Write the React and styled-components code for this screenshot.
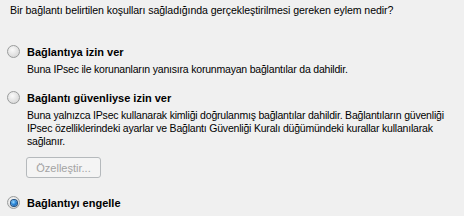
import React from "react";
import styled, { createGlobalStyle } from "styled-components";

const Global = createGlobalStyle`
  html, body {
    margin: 0;
    padding: 0;
    background: #f0f0f0;
  }
  body {
    font-family: "Liberation Sans", sans-serif;
    font-size: 11px;
    color: #000;
  }
`;

const Page = styled.div`
  width: 464px;
  height: 216px;
  overflow: hidden;
  padding: 4px 0 0 10px;
  box-sizing: border-box;
  display: flex;
  flex-direction: column;
`;

const Question = styled.p`
  margin: 0;
  line-height: 13px;
  font-size: 10.6px;
  letter-spacing: -0.09px;
  white-space: nowrap;
`;

const Options = styled.div`
  display: flex;
  flex-direction: column;
  margin-top: 27px;
  margin-left: -3px;
  gap: 14px;
`;

const Option = styled.div`
  display: flex;
  flex-direction: column;
`;

const Label = styled.label`
  display: flex;
  align-items: center;
  gap: 7px;
  height: 15px;
  font-weight: bold;
  font-size: 11px;
`;

const Radio = styled.span`
  width: 11px;
  height: 11px;
  border-radius: 50%;
  border: 1px solid #9a9c9c;
  background: radial-gradient(circle at 40% 35%, #fafafa 0%, #e2e2e2 55%, #cfcfcf 100%);
  display: flex;
  align-items: center;
  justify-content: center;
  flex: none;

  &::after {
    content: "";
    display: ${(p) => (p.$checked ? "block" : "none")};
    width: 6px;
    height: 6px;
    border-radius: 50%;
    background: radial-gradient(circle at 40% 35%, #9fdcff 0%, #2a86d8 45%, #0d4a94 100%);
    box-shadow: 0 0 0 1px #1d4f80;
  }
`;

const Description = styled.div`
  margin-left: 20px;
  margin-top: 4px;
  line-height: 13px;
  font-size: 10.5px;
  letter-spacing: -0.2px;
  white-space: nowrap;
`;

const Button = styled.button`
  margin: 9px 0 3px 19px;
  width: 75px;
  height: 21px;
  border: 1px solid #b5b9bc;
  border-radius: 3px;
  background: #f4f4f4;
  color: #a3a3a3;
  font-family: "Liberation Sans", sans-serif;
  font-size: 11px;
  padding: 0;
  align-self: flex-start;
`;

export default function App() {
  return (
    <Page>
      <Global />
      <Question>
        Bir bağlantı belirtilen koşulları sağladığında gerçekleştirilmesi gereken eylem nedir?
      </Question>
      <Options>
        <Option>
          <Label>
            <Radio />
            Bağlantıya izin ver
          </Label>
          <Description>
            Buna IPsec ile korunanların yanısıra korunmayan bağlantılar da dahildir.
          </Description>
        </Option>
        <Option>
          <Label>
            <Radio />
            Bağlantı güvenliyse izin ver
          </Label>
          <Description>
            Buna yalnızca IPsec kullanarak kimliği doğrulanmış bağlantılar dahildir. Bağlantıların güvenliği
            <br />
            IPsec özelliklerindeki ayarlar ve Bağlantı Güvenliği Kuralı düğümündeki kurallar kullanılarak
            <br />
            sağlanır.
          </Description>
          <Button disabled>Özelleştir...</Button>
        </Option>
        <Option>
          <Label>
            <Radio $checked />
            Bağlantıyı engelle
          </Label>
        </Option>
      </Options>
    </Page>
  );
}
